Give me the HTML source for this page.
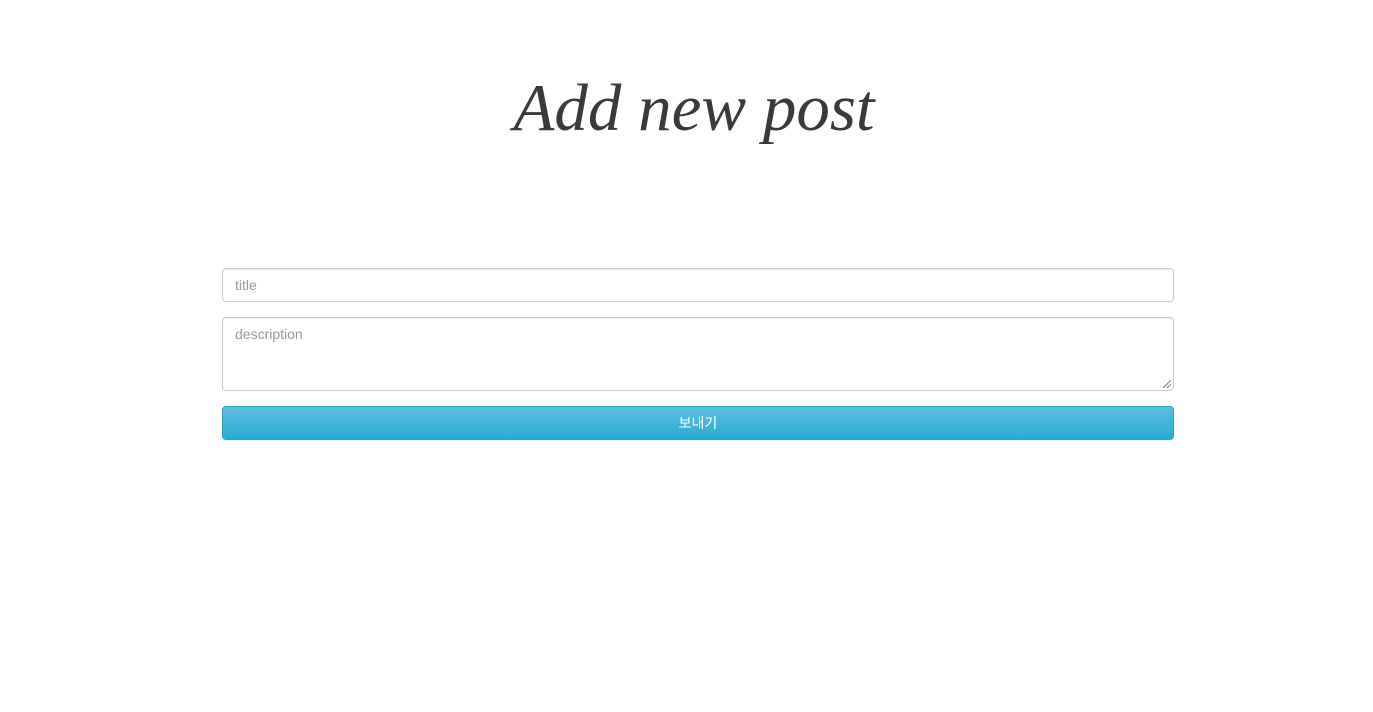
<!DOCTYPE html>
<html><head><meta charset="utf-8"><style>
body{margin:0;background:#fff;width:1373px;height:712px;position:relative;font-family:"Liberation Sans","Noto Sans CJK KR",sans-serif;}
h1{position:absolute;left:0;width:1388px;top:70px;margin:0;text-align:center;font-family:"Liberation Serif",serif;font-style:italic;font-weight:normal;font-size:67px;color:#3a3a3a;letter-spacing:0px;}
.f{position:absolute;left:222px;border:1px solid #ccc;border-radius:4px;box-shadow:inset 0 1px 1px rgba(0,0,0,.075);box-sizing:border-box;font-size:14px;color:#999;padding:8px 12px;}
.b{position:absolute;left:222px;width:952px;top:406px;height:34px;box-sizing:border-box;border:1px solid #28a4c9;border-radius:4px;background:linear-gradient(#5bc0de,#2aabd2);color:#fff;font-size:14px;text-align:center;line-height:32px;}
.grip{position:absolute;right:2px;bottom:2px;width:8px;height:8px;background:linear-gradient(135deg,transparent 45%,#888 45%,#888 55%,transparent 55%,transparent 70%,#888 70%,#888 80%,transparent 80%);}
</style></head><body>
<h1>Add new post</h1>
<div class="f" style="top:268px;height:34px;width:952px;line-height:16px;">title</div>
<div class="f" style="top:317px;height:74px;width:952px;line-height:16px;">description<div class="grip"></div></div>
<div class="b">보내기</div>
</body></html>
